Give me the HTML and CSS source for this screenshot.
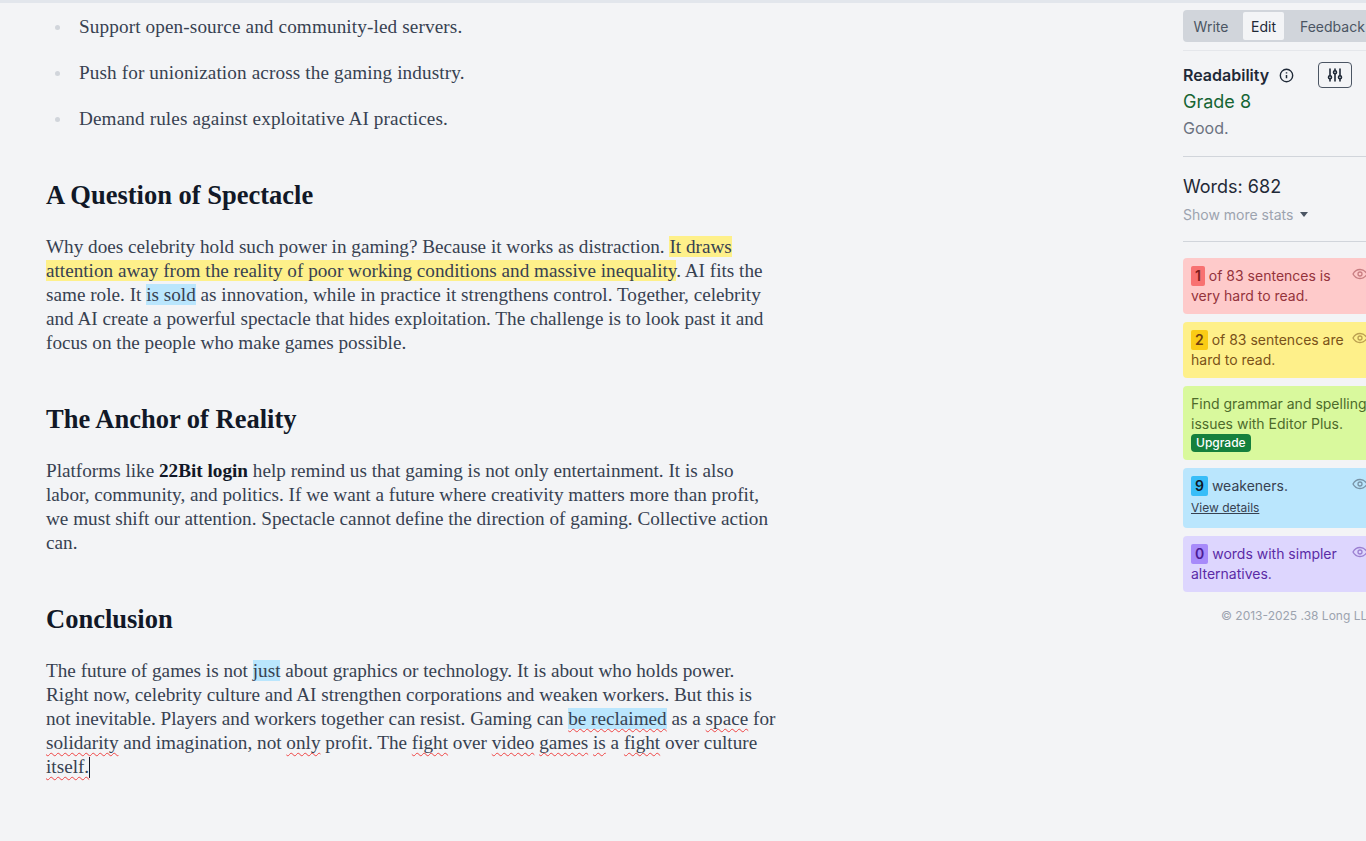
FILE: index.html

```html
<!DOCTYPE html>
<html lang="en">
<head>
  <meta charset="UTF-8" />
  <title>Editor</title>
  <link rel="stylesheet" href="styles.css">
</head>
<body>
  <div class="app">
    <main class="doc">
      <ul class="doc-list">
        <li>Support open-source and community-led servers.</li>
        <li>Push for unionization across the gaming industry.</li>
        <li>Demand rules against exploitative AI practices.</li>
      </ul>

      <h2>A Question of Spectacle</h2>
      <p>Why does celebrity hold such power in gaming? Because it works as distraction. <span class="hl-yellow">It draws </span><br><span class="hl-yellow">attention away from the reality of poor working conditions and massive inequality</span>. AI fits the<br>same role. It <span class="hl-blue">is sold</span> as innovation, while in practice it strengthens control. Together, celebrity<br>and AI create a powerful spectacle that hides exploitation. The challenge is to look past it and<br>focus on the people who make games possible.</p>

      <h2>The Anchor of Reality</h2>
      <p>Platforms like <strong>22Bit login</strong> help remind us that gaming is not only entertainment. It is also<br>labor, community, and politics. If we want a future where creativity matters more than profit,<br>we must shift our attention. Spectacle cannot define the direction of gaming. Collective action<br>can.</p>

      <h2>Conclusion</h2>
      <p>The future of games is not <span class="hl-blue">just</span> about graphics or technology. It is about who holds power.<br>Right now, celebrity culture and AI strengthen corporations and weaken workers. But this is<br>not inevitable. Players and workers together can resist. Gaming can <span class="hl-blue typo">be reclaimed</span> as a <span class="typo">space</span> for<br><span class="typo">solidarity</span> and imagination, not <span class="typo">only</span> profit. The <span class="typo">fight</span> over <span class="typo">video</span> <span class="typo">games</span> <span class="typo">is</span> a <span class="typo">fight</span> over culture<br><span class="typo">itself.</span><span class="caret"></span></p>
    </main>

    <aside class="side">
      <div class="tabs">
        <button class="tab">Write</button>
        <button class="tab active">Edit</button>
        <button class="tab">Feedback</button>
      </div>

      <section class="side-block readability">
        <div class="read-head">
          <span class="read-title">Readability</span>
          <svg class="info" viewBox="0 0 16 16" width="15" height="15" fill="none" stroke="currentColor">
            <circle cx="8" cy="8" r="6.6" stroke-width="1.5"/>
            <path d="M8 7.400v3.600M8 4.600v1.200" stroke-width="1.6"/>
          </svg>
          <button class="tune">
            <svg viewBox="0 0 16 16" width="16" height="16" fill="none" stroke="currentColor" stroke-width="1.6" stroke-linecap="round">
              <path d="M3 2v6.500M3 12v2M8 2v1.500M8 7v7M13 2v6.500M13 12v2"/>
              <circle cx="3" cy="10.200" r="1.500"/><circle cx="8" cy="5.200" r="1.500"/><circle cx="13" cy="10.200" r="1.500"/>
            </svg>
          </button>
        </div>
        <div class="grade">Grade 8</div>
        <div class="grade-note">Good.</div>
      </section>

      <section class="side-block stats">
        <div class="words">Words: 682</div>
        <div class="more">Show more stats <span class="more-caret"></span></div>
      </section>

      <section class="cards">
        <div class="card red has-eye">
          <span class="num">1</span> of 83 sentences is very hard to read.
          <svg class="eye" viewBox="0 0 16 12" width="16" height="12" fill="none" stroke="currentColor" stroke-width="1.3"><path d="M1 6c1.600-3 4-4.500 7-4.500S13.400 3 15 6c-1.600 3-4 4.500-7 4.500S2.600 9 1 6z"/><circle cx="8" cy="6" r="2"/></svg>
        </div>
        <div class="card yellow has-eye">
          <span class="num">2</span> of 83 sentences are hard to read.
          <svg class="eye" viewBox="0 0 16 12" width="16" height="12" fill="none" stroke="currentColor" stroke-width="1.3"><path d="M1 6c1.600-3 4-4.500 7-4.500S13.400 3 15 6c-1.600 3-4 4.500-7 4.500S2.600 9 1 6z"/><circle cx="8" cy="6" r="2"/></svg>
        </div>
        <div class="card green">
          Find grammar and spelling issues with Editor Plus.
          <a class="upgrade">Upgrade</a>
        </div>
        <div class="card blue has-eye">
          <span class="num">9</span> weakeners.
          <a class="details">View details</a>
          <svg class="eye" viewBox="0 0 16 12" width="16" height="12" fill="none" stroke="currentColor" stroke-width="1.3"><path d="M1 6c1.600-3 4-4.500 7-4.500S13.400 3 15 6c-1.600 3-4 4.500-7 4.500S2.600 9 1 6z"/><circle cx="8" cy="6" r="2"/></svg>
        </div>
        <div class="card purple has-eye">
          <span class="num">0</span> words with simpler alternatives.
          <svg class="eye" viewBox="0 0 16 12" width="16" height="12" fill="none" stroke="currentColor" stroke-width="1.3"><path d="M1 6c1.600-3 4-4.500 7-4.500S13.400 3 15 6c-1.600 3-4 4.500-7 4.500S2.600 9 1 6z"/><circle cx="8" cy="6" r="2"/></svg>
        </div>
      </section>

      <div class="copyright">© 2013-2025 .38 Long LLC</div>
    </aside>
  </div>
</body>
</html>
```

FILE: styles.css

```css
* {
  box-sizing: border-box;
  margin: 0;
  padding: 0;
}

html, body {
  height: 100%;
  overflow: hidden;
  background: #f3f4f6;
}

.app {
  height: 841px;
  display: flex;
  border-top: 3px solid #e2e6ec;
  overflow: hidden;
}

/* document column */
.doc {
  width: 1183px;
  flex: none;
  padding: 12px 0 0 46px;
  font-family: "Liberation Serif", serif;
  font-size: 19.2px;
  line-height: 24px;
  color: #374151;
}

.doc-list {
  list-style: none;
  margin-bottom: 48px;
  letter-spacing: .12px;
}

.doc-list li {
  position: relative;
  padding-left: 33px;
  margin-bottom: 22px;
}

.doc-list li::before {
  content: "";
  position: absolute;
  left: 9px;
  top: 10px;
  width: 5px;
  height: 5px;
  border-radius: 50%;
  background: #d1d5db;
}

.doc h2 {
  font-size: 26.5px;
  line-height: 32px;
  font-weight: bold;
  color: #111827;
  margin-bottom: 24px;
}

.doc p {
  margin-bottom: 48px;
  white-space: nowrap;
}

.doc strong {
  color: #111827;
}

.hl-yellow {
  background: #fef08a;
}

.hl-blue {
  background: #bae6fd;
}

.typo {
  text-decoration: underline wavy #ef4444 1.1px;
  text-decoration-skip-ink: none;
  text-underline-offset: 3px;
}

.caret {
  display: inline-block;
  width: 1px;
  height: 21px;
  vertical-align: -5px;
  background: #111827;
}

/* sidebar */
.side {
  width: 200px;
  flex: none;
  margin-top: 7px;
  font-family: Inter, sans-serif;
  font-size: 14px;
  color: #111827;
}

.tabs {
  display: flex;
  align-items: center;
  gap: 2px;
  height: 32px;
  padding: 0 2px;
  border-radius: 4px;
  background: #d1d5db;
}

.tab {
  height: 28px;
  padding: 0 8px;
  border: none;
  border-radius: 2px;
  background: none;
  font: 14px Inter, sans-serif;
  color: #4b5563;
}

.tab:first-child {
  width: 52px;
  margin-right: 4px;
}

.tab.active {
  width: 41px;
  background: #f3f4f6;
  color: #1f2937;
  margin-right: 6px;
}

.side-block {
  border-top: 1px solid #d1d5db;
}

.readability {
  height: 106px;
  margin-top: 8px;
  padding-top: 11px;
  border-top-color: #e5e7eb;
}

.read-head {
  display: flex;
  align-items: center;
  height: 26px;
  margin-bottom: 1px;
}

.read-title {
  font-size: 16px;
  font-weight: 600;
  color: #1f2937;
}

.info {
  margin-left: 10px;
  color: #1f2937;
}

.tune {
  width: 34px;
  height: 26px;
  margin-left: 24px;
  display: flex;
  align-items: center;
  justify-content: center;
  border: 1px solid #4b5563;
  border-radius: 4px;
  background: none;
  color: #1f2937;
}

.grade {
  font-size: 18px;
  line-height: 26px;
  color: #166534;
}

.grade-note {
  font-size: 16px;
  line-height: 26px;
  color: #6b7280;
}

.stats {
  height: 85px;
  padding-top: 18px;
}

.words {
  font-size: 18px;
  line-height: 24px;
  color: #1f2937;
}

.more {
  margin-top: 6px;
  font-size: 14px;
  line-height: 20px;
  color: #9ca3af;
}

.more-caret {
  display: inline-block;
  margin-left: 3px;
  vertical-align: 3px;
  border-left: 4.5px solid transparent;
  border-right: 4.5px solid transparent;
  border-top: 5px solid #4b5563;
}

.cards {
  border-top: 1px solid #d1d5db;
  padding-top: 16px;
  display: flex;
  flex-direction: column;
  gap: 8px;
}

.card {
  position: relative;
  padding: 8px;
  border-radius: 4px;
  line-height: 20px;
}

.has-eye {
  padding-right: 34px;
}

.num {
  display: inline-block;
  padding: 0 4px;
  border-radius: 2px;
  font-weight: 600;
}

.eye {
  position: absolute;
  right: 15px;
  top: 10px;
  opacity: .5;
}

.red { background: #fecaca; color: #94333c; }
.red .num { background: #f87171; color: #7f1d1d; }

.yellow { background: #fef08a; color: #7a5218; }
.yellow .num { background: #facc15; color: #713f12; }

.green { background: #d9f99d; color: #4d6b2b; }

.blue { background: #bae6fd; color: #374151; }
.blue .num { background: #38bdf8; color: #111827; }

.purple { background: #ddd6fe; color: #5b2ba6; }
.purple .num { background: #a78bfa; color: #4c1d95; }

.upgrade {
  display: table;
  padding: 0 5px;
  border-radius: 4px;
  background: #15803d;
  color: #fff;
  font-size: 12px;
  font-weight: 500;
  line-height: 18px;
}

.details {
  display: block;
  margin: 4px 0;
  font-size: 12px;
  line-height: 16px;
  text-decoration: underline;
  color: #374151;
}

.copyright {
  margin-top: 16px;
  padding-left: 38px;
  font-size: 12px;
  line-height: 16px;
  white-space: nowrap;
  color: #9ca3af;
}
```
